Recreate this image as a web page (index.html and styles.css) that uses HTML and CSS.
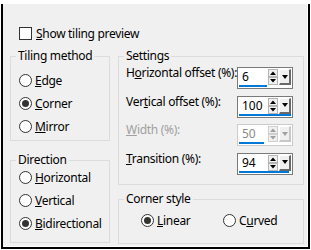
FILE: index.html
```html
<!DOCTYPE html>
<html lang="en">
<head>
  <meta charset="UTF-8" />
  <title>Tiling</title>
  <link rel="stylesheet" href="styles.css">
</head>
<body>

<div class="window">
  <div class="check"><span class="box"></span><span><u>S</u>how tiling preview</span></div>

  <div class="cols">
    <div class="col col-left">
      <fieldset class="group tiling">
        <legend>Tiling method</legend>
        <div class="options">
          <div class="option"><span class="radio"></span><span><u>E</u>dge</span></div>
          <div class="option"><span class="radio on"></span><span><u>C</u>orner</span></div>
          <div class="option"><span class="radio"></span><span><u>M</u>irror</span></div>
        </div>
      </fieldset>

      <fieldset class="group direction">
        <legend>Direction</legend>
        <div class="options">
          <div class="option"><span class="radio"></span><span><u>H</u>orizontal</span></div>
          <div class="option"><span class="radio"></span><span><u>V</u>ertical</span></div>
          <div class="option"><span class="radio on"></span><span><u>B</u>idirectional</span></div>
        </div>
      </fieldset>
    </div>

    <div class="col col-right">
      <fieldset class="group settings">
        <legend>Settings</legend>
        <div class="fields">
          <div class="field">
            <span class="label">H<u>o</u>rizontal offset (%):</span>
            <div class="spin">
              <div class="spin-main">
                <span class="value">6</span>
                <svg class="arrows" width="10" height="16" viewBox="0 0 10 16">
                  <rect x="0.5" y="0.5" width="9" height="7" fill="#f0f0f0" stroke="#b5b5b5"/>
                  <path d="M2 6h6L5 2.5z"/>
                  <rect x="0.5" y="8.5" width="9" height="7" fill="#f0f0f0" stroke="#b5b5b5"/>
                  <path d="M2 10h6l-3 3.5z"/>
                </svg>
                <span class="drop"></span>
              </div>
              <span class="bar" style="width:28px"></span>
            </div>
          </div>
          <div class="field">
            <span class="label">Ver<u>t</u>ical offset (%):</span>
            <div class="spin">
              <div class="spin-main">
                <span class="value">100</span>
                <svg class="arrows" width="10" height="16" viewBox="0 0 10 16">
                  <rect x="0.5" y="0.5" width="9" height="7" fill="#f0f0f0" stroke="#b5b5b5"/>
                  <path d="M2 6h6L5 2.5z"/>
                  <rect x="0.5" y="8.5" width="9" height="7" fill="#f0f0f0" stroke="#b5b5b5"/>
                  <path d="M2 10h6l-3 3.5z"/>
                </svg>
                <span class="drop"></span>
              </div>
              <span class="bar" style="width:52px"></span>
            </div>
          </div>
          <div class="field off">
            <span class="label"><u>W</u>idth (%):</span>
            <div class="spin">
              <div class="spin-main">
                <span class="value">50</span>
                <svg class="arrows" width="10" height="16" viewBox="0 0 10 16">
                  <rect x="0.5" y="0.5" width="9" height="7" fill="#f0f0f0" stroke="#d0d0d0"/>
                  <path d="M2 6h6L5 2.5z" fill="#a0a0a0"/>
                  <rect x="0.5" y="8.5" width="9" height="7" fill="#f0f0f0" stroke="#d0d0d0"/>
                  <path d="M2 10h6l-3 3.5z" fill="#a0a0a0"/>
                </svg>
                <span class="drop"></span>
              </div>
              <span class="bar" style="width:25px"></span>
            </div>
          </div>
          <div class="field">
            <span class="label"><u>T</u>ransition (%):</span>
            <div class="spin">
              <div class="spin-main">
                <span class="value">94</span>
                <svg class="arrows" width="10" height="16" viewBox="0 0 10 16">
                  <rect x="0.5" y="0.5" width="9" height="7" fill="#f0f0f0" stroke="#b5b5b5"/>
                  <path d="M2 6h6L5 2.5z"/>
                  <rect x="0.5" y="8.5" width="9" height="7" fill="#f0f0f0" stroke="#b5b5b5"/>
                  <path d="M2 10h6l-3 3.5z"/>
                </svg>
                <span class="drop"></span>
              </div>
              <span class="bar" style="width:50px"></span>
            </div>
          </div>
        </div>
      </fieldset>

      <fieldset class="group corner">
        <legend>Corner style</legend>
        <div class="corner-options">
          <div class="option"><span class="radio on"></span><span><u>L</u>inear</span></div>
          <div class="option"><span class="radio"></span><span>C<u>u</u>rved</span></div>
        </div>
      </fieldset>
    </div>
  </div>
</div>

</body>
</html>
```

FILE: styles.css
```css
* {
  box-sizing: border-box;
}

body {
  margin: 0;
  background: #fff;
  font-family: "Noto Sans", sans-serif;
  font-size: 12px;
  letter-spacing: -0.3px;
  color: #000;
  overflow: hidden;
  white-space: nowrap;
}

.window {
  height: 245px;
  margin: 4px 1px 0 1px;
  border: 2px solid #000;
  border-top: 0;
  background: #f0f0f0;
  box-shadow: inset -1px -1px 0 #fff;
  padding: 21px 3px 0 7px;
}

.check {
  display: flex;
  align-items: center;
  gap: 4px;
  height: 16px;
  margin-left: 9px;
}

.box {
  width: 13px;
  height: 13px;
  border: 1px solid #333;
  background: #fff;
}

.cols {
  display: flex;
  gap: 8px;
  margin-top: 7px;
}

.col {
  display: flex;
  flex-direction: column;
}
.col-left {
  width: 100px;
  gap: 11px;
}
.col-right {
  width: 186px;
  gap: 6px;
}

.group {
  margin: 0;
  padding: 0;
  min-width: 0;
  border: 1px solid #dcdcdc;
}
.group legend {
  margin-left: 5px;
  padding: 0 2px;
  line-height: 16px;
}

.tiling { height: 93px; }
.direction { height: 91px; }
.settings { height: 137px; }
.corner { height: 53px; }

.options {
  padding: 5px 0 0 8px;
}
.direction .options {
  padding-top: 0;
  margin-top: -2px;
}

.option {
  display: flex;
  align-items: center;
  gap: 3px;
  height: 23px;
}

.radio {
  flex: none;
  display: flex;
  align-items: center;
  justify-content: center;
  width: 13px;
  height: 13px;
  border: 1px solid #333;
  border-radius: 50%;
  background: #fff;
}
.radio.on::after {
  content: "";
  width: 7px;
  height: 7px;
  border-radius: 50%;
  background: #333;
}

.fields {
  padding: 1px 0 0 7px;
}

.field {
  display: flex;
  justify-content: space-between;
  height: 28.5px;
  line-height: 16px;
}
.field.off {
  color: #a0a0a0;
}

.spin {
  flex: none;
  display: flex;
  flex-direction: column;
  width: 56px;
  height: 22px;
  margin: 2px 10px 0 0;
  border: 1px solid #7a7a7a;
  background: #fff;
}
.off .spin {
  border-color: #cccccc;
}

.spin-main {
  display: flex;
  flex: 1;
}

.value {
  flex: 1;
  padding-left: 4px;
  line-height: 17px;
  letter-spacing: 0;
}
.off .value {
  color: #8a8a8a;
}

.arrows {
  flex: none;
  margin: 1px 1px 0 0;
}

.drop {
  flex: none;
  display: flex;
  align-items: center;
  justify-content: center;
  width: 12px;
  margin: 1px 1px 0 0;
  background: #f0f0f0;
  border-style: solid;
  border-width: 1px 2px 2px 1px;
  border-color: #fff #696969 #696969 #fff;
}
.drop::after {
  content: "";
  border-top: 4px solid #000;
  border-left: 3px solid transparent;
  border-right: 3px solid transparent;
}
.off .drop {
  border-color: #fff #c8c8c8 #c8c8c8 #fff;
}
.off .drop::after {
  border-top-color: #a0a0a0;
}

.bar {
  height: 2px;
  margin: 0 0 1px 1px;
  background: #0078d7;
}

.corner-options {
  display: grid;
  grid-template-columns: 82px auto;
  padding: 2px 0 0 22px;
}
```
